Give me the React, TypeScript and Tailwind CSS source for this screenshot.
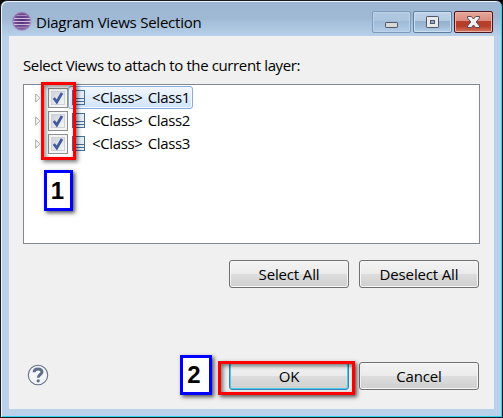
import { ReactNode } from 'react';

function EclipseIcon() {
  return (
    <svg width="20" height="20" viewBox="0 0 20 20" className="shrink-0">
      <defs>
        <radialGradient id="orb" cx="0.5" cy="0.48" r="0.55">
          <stop offset="0" stopColor="#50307a" />
          <stop offset="0.65" stopColor="#6f4b90" />
          <stop offset="1" stopColor="#a78abf" />
        </radialGradient>
      </defs>
      <circle cx="9.8" cy="10.3" r="9.3" fill="url(#orb)" stroke="#a993c2" strokeWidth="0.7" />
      <path d="M2 7.5H18M1 10.5H19M2 13.5H18" stroke="#cdbddd" strokeWidth="1" />
      <path d="M4.5 4.5H15M5 16.2H15" stroke="#a68cbc" strokeWidth="1" />
    </svg>
  );
}

function CaptionButton({ kind }: { kind: 'min' | 'max' | 'close' }) {
  const tone =
    kind === 'close'
      ? 'border-[#4b1520] bg-[linear-gradient(#e6a79c_0%,#d98b7f_43%,#b8402c_44%,#b43e29_70%,#d7765f_100%)] shadow-[inset_0_0_0_1px_#eab5a9]'
      : kind === 'max'
        ? 'border-[#5f7f9f] bg-[linear-gradient(#bfd3e8_0%,#b3cae2_43%,#94b0cd_44%,#9bb8d5_70%,#b6d0e9_100%)] shadow-[inset_0_0_0_1px_#cadff2]'
        : 'border-[#7d9bbb] bg-[linear-gradient(#b2c9e0_0%,#abc4dd_43%,#9db9d6_44%,#b2cce7_100%)] shadow-[inset_0_0_0_1px_#bdd3e9]';
  return (
    <div className={'h-[22px] w-[39px] rounded-[2px] border ' + tone}>
      <svg width="37" height="20" viewBox="0 0 37 20">
        {kind === 'min' && <rect x="12.5" y="10.5" width="12" height="5" rx="0.7" fill="#d8d8d8" stroke="#505766" />}
        {kind === 'max' && (
          <>
            <rect x="12.5" y="4.5" width="12" height="11" rx="0.7" fill="#e7e9eb" stroke="#505766" />
            <rect x="16.5" y="8.5" width="4" height="3" fill="#91aac5" stroke="#4b596e" />
          </>
        )}
        {kind === 'close' && (
          <path
            d="M12.5 4.5H16.4L18.5 7L20.6 4.5H24.5V6L21.2 10L24.5 14V15.5H20.6L18.5 13L16.4 15.5H12.5V14L15.8 10L12.5 6Z"
            fill="#f1f1f1"
            stroke="#5c4754"
            strokeLinejoin="round"
          />
        )}
      </svg>
    </div>
  );
}

function Row({ name, selected = false }: { name: string; selected?: boolean }) {
  return (
    <div className="flex h-[23px] items-center">
      <svg width="6" height="10" viewBox="0 0 6 10" className="ml-[11px] shrink-0">
        <path d="M0.7 1L4.8 5L0.7 9Z" fill="#fff" stroke="#a5a5a5" />
      </svg>
      <div className="ml-[7px] h-5 w-5 shrink-0 border border-[#8e8f8f] bg-[#f4f4f4] p-[2px]">
        <svg width="14" height="14" viewBox="0 0 14 14">
          <defs>
            <linearGradient id="well" x1="0" y1="0" x2="1" y2="1">
              <stop stopColor="#cdd1d8" />
              <stop offset="1" stopColor="#f5f6f7" />
            </linearGradient>
          </defs>
          <rect x="0.5" y="0.5" width="13" height="13" fill="url(#well)" stroke="#cdd1d8" />
          <path d="M2.8 7L5.8 11L11 2" fill="none" stroke="#415a9c" strokeWidth="2.7" />
        </svg>
      </div>
      <div
        className={
          'flex h-[23px] w-[125px] items-center rounded-[3px] border pl-[3px] ' +
          (selected
            ? 'border-[#84acdd] bg-[linear-gradient(#f2f7fe,#cfe3fd)] shadow-[inset_0_0_0_1px_#f5f9ff]'
            : 'border-transparent')
        }
      >
        <svg width="13" height="16" viewBox="0 0 13 16" className="shrink-0">
          <rect x="0.5" y="0.5" width="12" height="14" fill="#e6eff8" stroke="#447099" />
          <path d="M1 8.5H12M1 11.5H12" stroke="#447099" />
        </svg>
        <span className="ml-[7px] text-[15px] leading-[21px] tracking-[-0.35px] [word-spacing:1.5px]">&lt;Class&gt; {name}</span>
      </div>
    </div>
  );
}

function PushButton({ children, focused = false }: { children: ReactNode; focused?: boolean }) {
  return (
    <button
      className={
        'h-7 w-[120px] rounded-[3px] border bg-[linear-gradient(#f3f3f3_0%,#ebebeb_49%,#dddddd_50%,#cfcfcf_100%)] text-center text-[15px] leading-[24px] tracking-[-0.15px] ' +
        (focused
          ? 'border-[#3c7fb1] shadow-[inset_0_0_0_1px_#46cdf1]'
          : 'border-[#707070] shadow-[inset_0_0_0_1px_#f7f7f7]')
      }
    >
      {children}
    </button>
  );
}

export default function App() {
  return (
    <div className="h-[418px] w-[503px] overflow-hidden bg-black font-['Open_Sans','Noto_Sans',sans-serif] text-black">
      <div className="relative h-[418px] w-[503px] rounded-t-[7px] border border-[#1a1a20] bg-[#b9d1ea] bg-[linear-gradient(#9cb6d3_0px,#9fb9d5_17px,#b9d1ea_36px)] bg-no-repeat px-2 shadow-[inset_1px_1px_0_#e9f4fd,inset_-1px_-1px_0_#2bd3ee]">
        <header className="flex h-[35px] items-start">
          <div className="ml-[3px] mt-[10px]">
            <EclipseIcon />
          </div>
          <h1 className="ml-1 mt-[11px] whitespace-nowrap text-[15px] leading-[21px] tracking-[-0.22px]">Diagram Views Selection</h1>
          <div className="ml-auto mr-[1px] mt-[10px] flex gap-[2px]">
            <CaptionButton kind="min" />
            <CaptionButton kind="max" />
            <CaptionButton kind="close" />
          </div>
        </header>

        <main className="h-[373px] bg-[#f0f0f0] px-[14px] pt-[18px]">
          <p className="h-[30px] whitespace-nowrap text-[15px] leading-[22px] tracking-[-0.38px]">
            Select Views to attach to the current layer:
          </p>
          <div className="h-[160px] w-[457px] border border-[#828790] bg-white pt-[1px]">
            <Row name="Class1" selected />
            <Row name="Class2" />
            <Row name="Class3" />
          </div>
          <div className="mt-4 flex justify-end gap-[10px] pr-[1px]">
            <PushButton>Select All</PushButton>
            <PushButton>Deselect All</PushButton>
          </div>
          <footer className="mt-[74px] flex items-center gap-[10px] pr-[1px]">
            <svg width="22" height="22" viewBox="0 0 22 22" className="mb-[2px] ml-[4px] mr-auto">
              <circle cx="11" cy="11" r="9.7" fill="#f4f5f8" stroke="#63718c" strokeWidth="1.1" />
              <path d="M7.1 8.3C7.1 3.9 15 3.9 15 8C15 10.5 11.2 10.6 11.2 13.8" fill="none" stroke="#5d6d8c" strokeWidth="2.9" />
              <circle cx="11.2" cy="16.8" r="1.6" fill="#5d6d8c" />
            </svg>
            <PushButton focused>OK</PushButton>
            <PushButton>Cancel</PushButton>
          </footer>
        </main>

        <div className="absolute left-[40px] top-[81px] h-[78px] w-[35px] border-[3px] border-[#ff0000] shadow-[2px_2px_4px_#0008,inset_2px_2px_4px_#0007]" />
        <div className="absolute left-[43px] top-[169px] flex h-[41px] w-[29px] items-center justify-center border-[3px] border-[#0000ff] bg-white pr-[2px] font-['Liberation_Sans',sans-serif] text-[24px] font-bold shadow-[2px_2px_4px_#000a]">1</div>
        <div className="absolute left-[179px] top-[354px] flex h-[40px] w-[32px] items-center justify-center border-[3px] border-[#0000ff] bg-white pr-1 font-['Liberation_Sans',sans-serif] text-[24px] font-bold shadow-[2px_2px_4px_#000a]">2</div>
        <div className="absolute left-[217px] top-[360px] h-[34px] w-[137px] border-[3px] border-[#ff0000] shadow-[2px_2px_4px_#000a,inset_2px_2px_4px_#0008]" />
      </div>
    </div>
  );
}
